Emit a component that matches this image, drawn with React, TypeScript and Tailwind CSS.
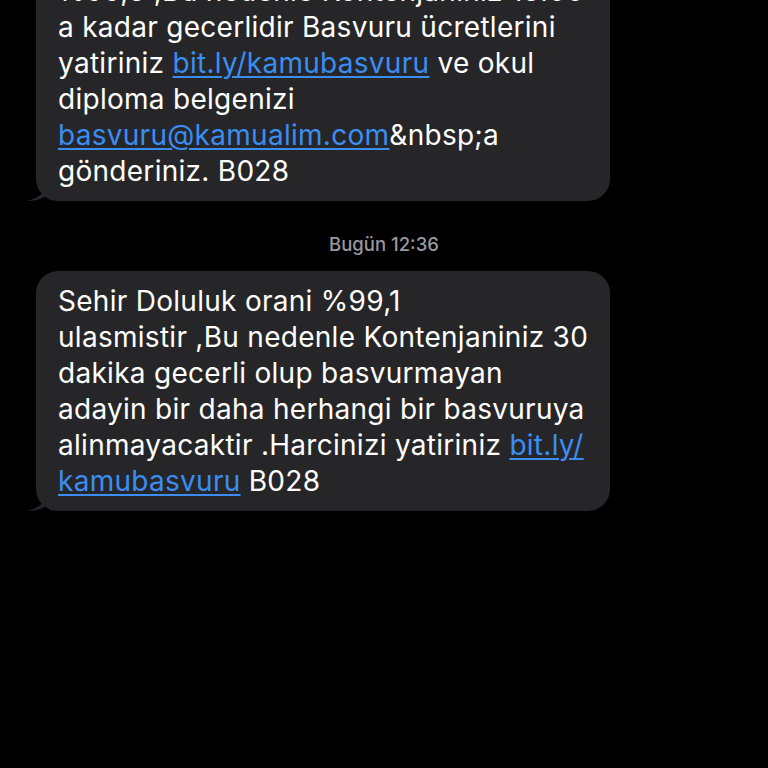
import React from "react";

const Tail: React.FC = () => (
    <svg
        className="absolute left-[-10px] bottom-0"
        width="26"
        height="24"
        viewBox="0 0 26 24"
    >
        <path
            d="M18 0 L18 10 C18 16 14 20.5 1 24 C9 24 15 22.5 20 19 C22 21 24 22.5 26 24 L26 0 Z"
            fill="#262628"
        />
    </svg>
);

const Link: React.FC<{ children: React.ReactNode }> = ({ children }) => (
    <span className="text-[#3a8ef3] underline decoration-[1.5px] underline-offset-[3px]">{children}</span>
);

const Bubble: React.FC<{ lines: React.ReactNode[]; className?: string }> = ({ lines, className }) => (
    <div className={"relative ml-[36px] w-[574px] rounded-[22px] bg-[#262628] pl-[22px] pr-4 py-[12px] " + (className || "")}>
        {lines.map((line, i) => (
            <div key={i} className="h-[36px] leading-[36px] whitespace-nowrap">
                {line}
            </div>
        ))}
        <Tail />
    </div>
);

const App: React.FC = () => {
    const first = [
        "%99,5 ,Bu nedenle Kontenjaniniz 15:00",
        "a kadar gecerlidir Basvuru ücretlerini",
        <>yatiriniz <Link>bit.ly/kamubasvuru</Link> ve okul</>,
        "diploma belgenizi",
        <><Link>basvuru@kamualim.com</Link>&amp;nbsp;a</>,
        "gönderiniz. B028",
    ];

    const second = [
        "Sehir Doluluk orani %99,1",
        "ulasmistir ,Bu nedenle Kontenjaniniz 30",
        "dakika gecerli olup basvurmayan",
        "adayin bir daha herhangi bir basvuruya",
        <>alinmayacaktir .Harcinizi yatiriniz <Link>bit.ly/</Link></>,
        <><Link>kamubasvuru</Link> B028</>,
    ];

    return (
        <div
            className="h-[768px] w-[768px] overflow-hidden bg-black text-white text-[28px] tracking-[0.01em]"
            style={{ fontFamily: "Inter, 'Noto Sans', sans-serif" }}
        >
            <Bubble lines={first} className="mt-[-39px]" />
            <div className="mt-[32px] mb-[16px] text-center text-[18.5px] leading-[22px] font-medium tracking-normal text-[#98989e]">
                Bugün 12:36
            </div>
            <Bubble lines={second} />
        </div>
    );
};

export default App;
